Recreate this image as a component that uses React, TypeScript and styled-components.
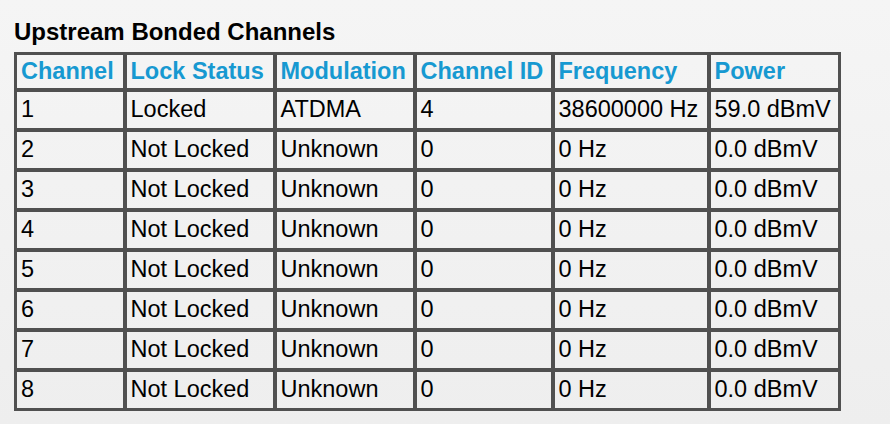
import React from 'react';
import styled, { createGlobalStyle } from 'styled-components';

const GlobalStyle = createGlobalStyle`
  body {
    margin: 0;
    background: #f3f3f3;
    font-family: "Liberation Sans", Arial, sans-serif;
  }
`;

const Page = styled.div`
  padding: 18px 14px 0;
  min-height: 406px;
  background: linear-gradient(#f5f5f5, #eeeeee);
`;

const Title = styled.h2`
  margin: 0 0 7px;
  font-size: 24px;
  font-weight: bold;
  line-height: 27px;
  color: #000;
`;

const Table = styled.table`
  border-collapse: collapse;
  font-size: 23.5px;
  color: #000;

  tr > *:first-child {
    border-left-width: 3px;
  }
  tr > *:last-child {
    border-right-width: 3px;
  }
  thead tr > * {
    border-top-width: 3px;
  }
  tbody tr:last-child > * {
    border-bottom-width: 3px;
  }
`;

const HeadCell = styled.th<{ $w: number }>`
  width: ${(p) => p.$w}px;
  height: 36px;
  padding: 0 4px;
  border: 4px solid #505050;
  text-align: left;
  font-weight: bold;
  color: #1799d1;
  white-space: nowrap;
  box-sizing: border-box;
`;

const Cell = styled.td`
  height: 36px;
  padding: 0 4px;
  border: 4px solid #505050;
  white-space: nowrap;
`;

const columns: [string, number][] = [
  ['Channel', 109],
  ['Lock Status', 150],
  ['Modulation', 140],
  ['Channel ID', 138],
  ['Frequency', 156],
  ['Power', 131],
];

const rows = [
  ['1', 'Locked', 'ATDMA', '4', '38600000 Hz', '59.0 dBmV'],
  ...[2, 3, 4, 5, 6, 7, 8].map((n) => [
    String(n),
    'Not Locked',
    'Unknown',
    '0',
    '0 Hz',
    '0.0 dBmV',
  ]),
];

export default function App() {
  return (
    <>
      <GlobalStyle />
      <Page>
        <Title>Upstream Bonded Channels</Title>
        <Table>
          <thead>
            <tr>
              {columns.map(([label, w]) => (
                <HeadCell key={label} $w={w}>
                  {label}
                </HeadCell>
              ))}
            </tr>
          </thead>
          <tbody>
            {rows.map((r) => (
              <tr key={r[0]}>
                {r.map((v, i) => (
                  <Cell key={i}>{v}</Cell>
                ))}
              </tr>
            ))}
          </tbody>
        </Table>
      </Page>
    </>
  );
}
